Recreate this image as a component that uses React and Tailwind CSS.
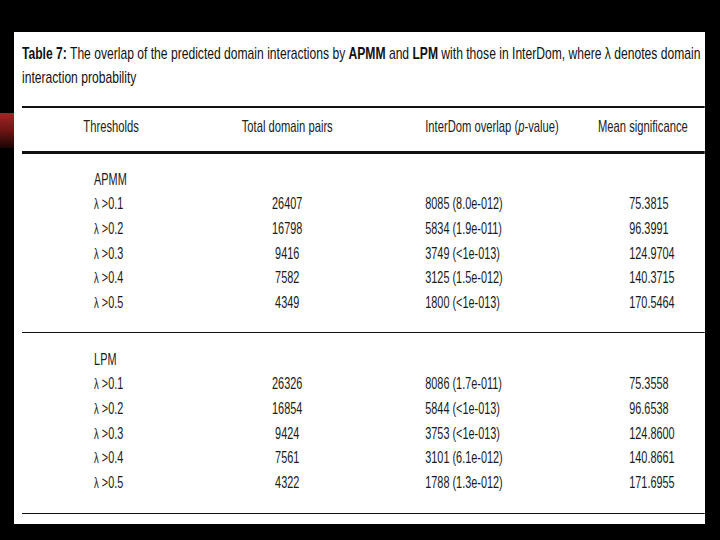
const apmm = [
  ["0.1", "26407", "8085 (8.0e-012)", "75.3815"],
  ["0.2", "16798", "5834 (1.9e-011)", "96.3991"],
  ["0.3", "9416", "3749 (<1e-013)", "124.9704"],
  ["0.4", "7582", "3125 (1.5e-012)", "140.3715"],
  ["0.5", "4349", "1800 (<1e-013)", "170.5464"],
];

const lpm = [
  ["0.1", "26326", "8086 (1.7e-011)", "75.3558"],
  ["0.2", "16854", "5844 (<1e-013)", "96.6538"],
  ["0.3", "9424", "3753 (<1e-013)", "124.8600"],
  ["0.4", "7561", "3101 (6.1e-012)", "140.8661"],
  ["0.5", "4322", "1788 (1.3e-012)", "171.6955"],
];

// the scan is squeezed sideways, so the table is laid out wide and scaled on x
const cols = "grid grid-cols-[262px_256px_259px_227px] h-[24.6px] items-center";

function Section({ name, rows }) {
  return (
    <div className="text-[16px] leading-[20px] text-[#1a1a1a]">
      <div className={cols}>
        <div className="pl-[106px]">{name}</div>
      </div>
      {rows.map((r) => (
        <div key={r[0]} className={cols}>
          <div className="pl-[106px]">
            <span className="text-[14px] leading-none">λ</span> &gt;{r[0]}
          </div>
          <div className="text-center">{r[1]}</div>
          <div className="pl-[75px]">{r[2]}</div>
          <div className="pl-[116px]">{r[3]}</div>
        </div>
      ))}
    </div>
  );
}

export default function App() {
  return (
    <div className="w-[720px] h-[540px] bg-black flex overflow-hidden font-['Liberation_Sans',Arial,sans-serif]">
      <div className="w-[14px] shrink-0">
        <div className="mt-[113px] h-[35px] bg-gradient-to-b from-[#a32626] via-[#6e1414] to-[#1a0505]" />
      </div>
      <div className="mt-[32px] w-[691px] h-[492px] bg-white pl-[8px] overflow-hidden">
        <div className="pt-[10px] text-[17px] leading-[24px] text-[#111] whitespace-nowrap origin-left scale-x-[0.712]">
          <div>
            <b>Table 7:</b> The overlap of the predicted domain interactions by <b>APMM</b> and <b>LPM</b> with those in
            InterDom, where λ denotes domain
          </div>
          <div>interaction probability</div>
        </div>
        <div className="w-[1004px] origin-left scale-x-[0.68]">
          <div className="mt-[16px] h-[2px] bg-[#111]" />
          <div className="grid grid-cols-[262px_256px_259px_227px] pt-[8px] pb-[15px] text-[16.5px] leading-[20px] text-[#222] whitespace-nowrap">
            <div className="text-center">Thresholds</div>
            <div className="text-center">Total domain pairs</div>
            <div className="pl-[75px]">
              InterDom overlap (<i>p</i>-value)
            </div>
            <div className="pl-[70px]">Mean significance</div>
          </div>
          <div className="h-[3px] bg-[#111]" />
          <div className="mt-[13.5px]">
            <Section name="APMM" rows={apmm} />
          </div>
          <div className="mt-[16.5px] h-px bg-[#111]" />
          <div className="mt-[15px]">
            <Section name="LPM" rows={lpm} />
          </div>
          <div className="mt-[17.5px] h-px bg-[#111]" />
        </div>
      </div>
    </div>
  );
}
